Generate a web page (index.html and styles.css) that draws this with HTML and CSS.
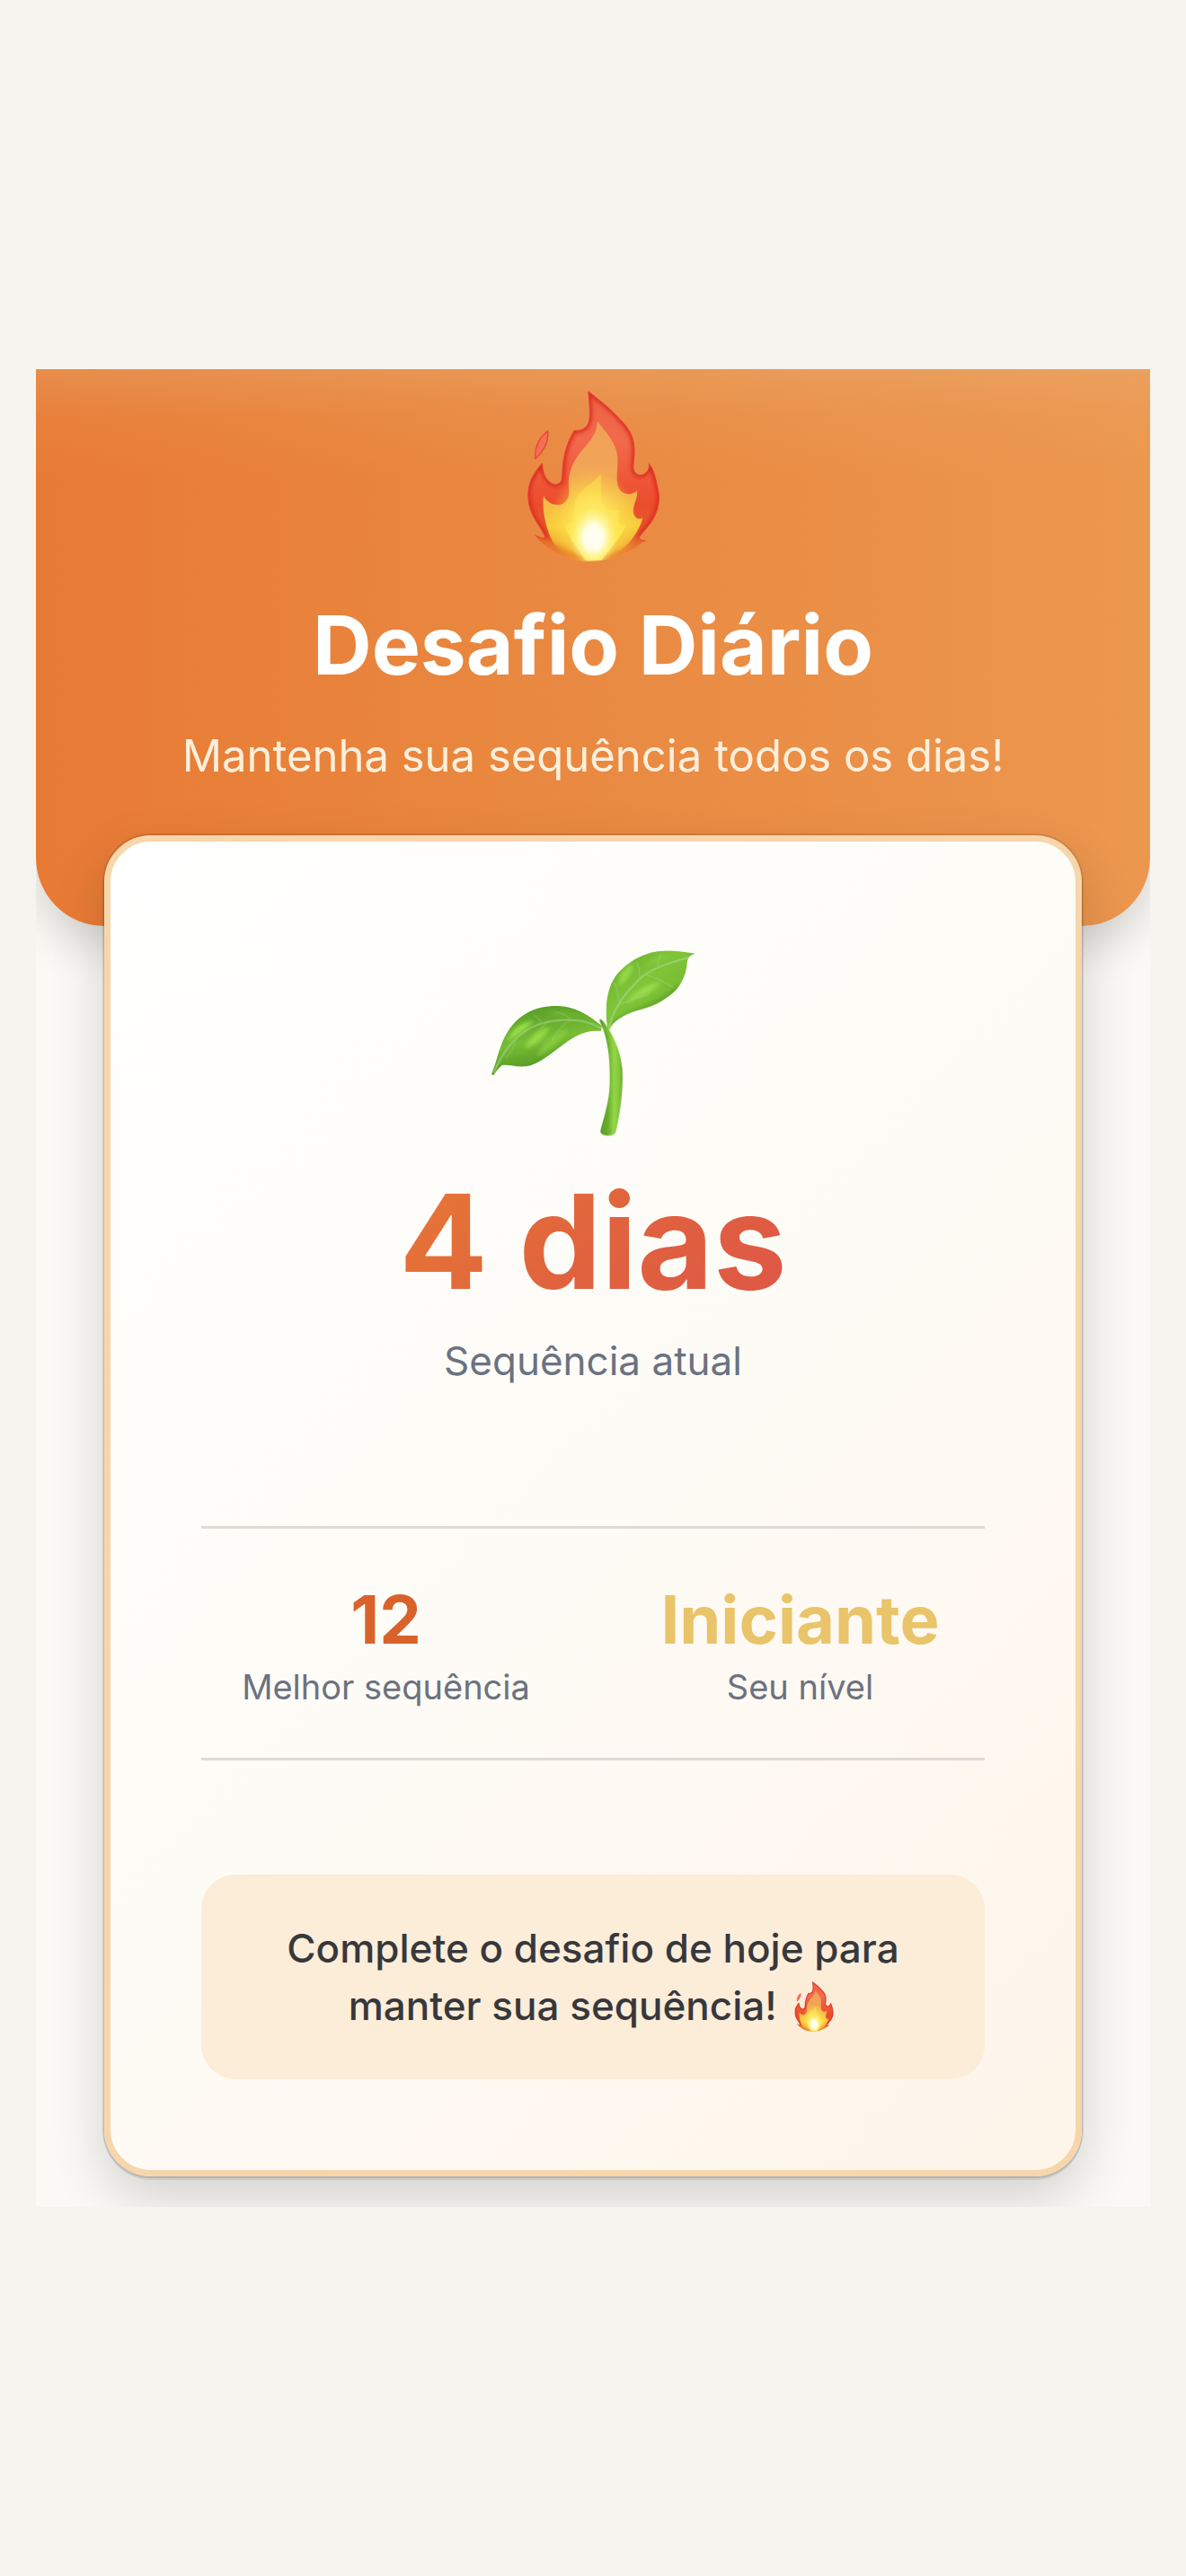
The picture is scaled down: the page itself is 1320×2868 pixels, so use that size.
FILE: index.html
```html
<!DOCTYPE html>
<html lang="pt-BR">
	<head>
		<meta charset="UTF-8">
		<meta name="viewport" content="width=device-width, initial-scale=1">
		<title>Desafio Diário</title>
		<link rel="stylesheet" href="styles.css">
	</head>

	<body>
		<!-- shared flame drawing -->
		<svg class="defs" width="0" height="0" aria-hidden="true">
			<defs>
				<linearGradient id="flameRed" x1="0" y1="0" x2="0" y2="1">
					<stop offset="0" stop-color="#ec6244"/>
					<stop offset="0.3" stop-color="#f2694c"/>
					<stop offset="0.65" stop-color="#ec4d2c"/>
					<stop offset="0.85" stop-color="#e5572a"/>
					<stop offset="1" stop-color="#f0a04c"/>
				</linearGradient>
				<linearGradient id="flameOrange" x1="0" y1="0" x2="0" y2="1">
					<stop offset="0" stop-color="#f0a058"/>
					<stop offset="0.3" stop-color="#f1a457"/>
					<stop offset="0.5" stop-color="#f4b04e"/>
					<stop offset="0.75" stop-color="#f8cd3c"/>
					<stop offset="1" stop-color="#e98a2c"/>
				</linearGradient>
				<linearGradient id="flameYellow" x1="0" y1="0" x2="0" y2="1">
					<stop offset="0" stop-color="#f8c350"/>
					<stop offset="0.5" stop-color="#fad64c"/>
					<stop offset="1" stop-color="#fdee3f"/>
				</linearGradient>
				<radialGradient id="flameHalo">
					<stop offset="0" stop-color="#fff58a" stop-opacity="0.95"/>
					<stop offset="0.5" stop-color="#ffee5c" stop-opacity="0.6"/>
					<stop offset="1" stop-color="#ffe23c" stop-opacity="0"/>
				</radialGradient>
				<radialGradient id="flameGlow">
					<stop offset="0" stop-color="#fffff8"/>
					<stop offset="0.4" stop-color="#fffff0" stop-opacity="0.95"/>
					<stop offset="1" stop-color="#fff88a" stop-opacity="0"/>
				</radialGradient>
				<filter id="soft" x="-10%" y="-10%" width="120%" height="120%">
					<feGaussianBlur stdDeviation="7"/>
				</filter>
				<clipPath id="flameClip">
					<path d="M283 45C320 75 360 105 390 140C425 175 438 205 437 250C436 280 430 300 436 312C445 328 462 330 475 318C486 308 487 298 486 287C500 305 506 325 514 365C524 400 520 430 505 462C492 490 470 510 455 530C450 538 458 546 474 545C450 560 430 575 400 588C360 606 320 615 280 614C240 612 210 603 175 585C145 568 120 548 105 527C115 532 125 537 137 537C145 530 105 480 95 455C82 425 78 395 84 365C90 335 108 310 128 286C130 310 135 335 155 350C170 362 190 358 194 340C198 320 195 290 203 260C210 225 222 200 236 176C255 178 275 172 284 150C292 120 285 80 283 45Z"/>
				</clipPath>
			</defs>
			<symbol id="flame" viewBox="76 43 448 574">
				<path d="M147 178C150 205 145 235 106 270C102 240 115 200 147 178Z" fill="#f3714f" stroke="#ea3f47" stroke-width="4"/>
				<g clip-path="url(#flameClip)">
					<rect x="70" y="40" width="460" height="580" fill="url(#flameRed)"/>
					<path d="M283 45C320 75 360 105 390 140C425 175 438 205 437 250C436 280 430 300 436 312C445 328 462 330 475 318C486 308 487 298 486 287C500 305 506 325 514 365C524 400 520 430 505 462C492 490 470 510 455 530M137 537C145 530 105 480 95 455C82 425 78 395 84 365C90 335 108 310 128 286C130 310 135 335 155 350C170 362 190 358 194 340C198 320 195 290 203 260C210 225 222 200 236 176C255 178 275 172 284 150C292 120 285 80 283 45" fill="none" stroke="#d9291f" stroke-width="15" filter="url(#soft)"/>
					<path d="M313 145C340 180 375 215 380 260C384 300 372 340 385 370C400 395 430 392 446 378C450 410 420 440 440 465C448 474 460 472 465 468C455 510 420 560 370 595C330 612 300 614 275 614C220 600 175 580 155 530C135 480 128 430 133 395C145 420 170 428 190 424C215 415 220 395 218 370C213 330 225 290 255 250C285 215 312 190 313 145Z" fill="url(#flameOrange)"/>
					<path d="M324 320C330 350 318 400 336 430C346 446 372 450 384 440C392 462 372 480 392 492C398 496 404 494 408 490C395 535 355 570 328 610L272 610C250 570 210 530 205 488C220 494 232 484 234 466C236 446 232 420 246 395C265 368 305 350 324 320Z" fill="url(#flameYellow)"/>
					<ellipse cx="300" cy="490" rx="150" ry="180" fill="url(#flameHalo)"/>
					<ellipse cx="300" cy="535" rx="80" ry="100" fill="url(#flameGlow)"/>
					<path d="M105 527C150 545 215 570 272 612L180 614ZM474 545C430 560 375 575 328 610L420 612Z" fill="#e87a28" opacity="0.6" filter="url(#soft)"/>
				</g>
				<path d="M283 45C320 75 360 105 390 140C425 175 438 205 437 250C436 280 430 300 436 312C445 328 462 330 475 318C486 308 487 298 486 287C500 305 506 325 514 365C524 400 520 430 505 462C492 490 470 510 455 530C450 538 458 546 474 545M105 527C115 532 125 537 137 537C145 530 105 480 95 455C82 425 78 395 84 365C90 335 108 310 128 286C130 310 135 335 155 350C170 362 190 358 194 340C198 320 195 290 203 260C210 225 222 200 236 176C255 178 275 172 284 150C292 120 285 80 283 45" fill="none" stroke="#ea4038" stroke-width="3"/>
			</symbol>
		</svg>

		<main class="panel">
			<header class="hero">
				<svg class="hero-icon" role="img" aria-label="Fogo"><use href="#flame"/></svg>
				<h1 class="hero-title">Desafio Diário</h1>
				<p class="hero-text">Mantenha sua sequência todos os dias!</p>
			</header>

			<section class="card">
				<svg class="sprout" viewBox="72 82 686 624" role="img" aria-label="Broto">
					<defs>
						<linearGradient id="leafRight" x1="0" y1="0" x2="1" y2="1">
							<stop offset="0" stop-color="#64a92c"/>
							<stop offset="0.4" stop-color="#80c437"/>
							<stop offset="0.7" stop-color="#78bb33"/>
							<stop offset="1" stop-color="#4b8f23"/>
						</linearGradient>
						<linearGradient id="leafLeft" x1="0.3" y1="0" x2="0.6" y2="1">
							<stop offset="0" stop-color="#559a28"/>
							<stop offset="0.5" stop-color="#78bd34"/>
							<stop offset="1" stop-color="#468820"/>
						</linearGradient>
						<linearGradient id="stem" x1="0" y1="0" x2="1" y2="0">
							<stop offset="0" stop-color="#579a28"/>
							<stop offset="0.35" stop-color="#66ac2c"/>
							<stop offset="0.65" stop-color="#92d544"/>
							<stop offset="1" stop-color="#68ad2f"/>
						</linearGradient>
						<clipPath id="leafRightClip">
							<path d="M462 345C452 280 458 215 490 170C530 120 590 88 650 87C685 86 720 90 755 96C735 102 730 110 728 125C725 170 705 215 660 243C620 275 570 280 530 297C500 312 480 325 468 350Z"/>
						</clipPath>
						<clipPath id="leafLeftClip">
							<path d="M440 355C400 350 365 365 335 385C290 415 250 455 205 470C165 480 135 465 110 469C100 476 90 490 83 501C75 502 73 500 76 495C95 450 100 400 130 355C165 300 220 270 295 271C350 272 400 300 443 338Z"/>
						</clipPath>
					</defs>
					<g clip-path="url(#leafRightClip)">
						<rect x="450" y="80" width="310" height="280" fill="url(#leafRight)"/>
						<g filter="url(#soft)">
							<path d="M497 205C500 165 520 140 548 130C548 165 525 190 497 205Z" fill="#9be04c" opacity="0.8"/>
							<path d="M520 265C550 225 590 195 640 192C620 225 570 240 520 265Z" fill="#a0e552" opacity="0.8"/>
							<path d="M585 140C600 115 630 98 670 100C650 120 620 130 585 140Z" fill="#89ce3e" opacity="0.6"/>
							<path d="M480 330C540 285 640 265 700 205" stroke="#478c22" stroke-width="10" fill="none" opacity="0.6"/>
						</g>
						<path d="M466 345C480 280 520 230 570 180C610 145 660 130 735 108" stroke="#9bd279" stroke-width="7" fill="none" opacity="0.8"/>
						<path d="M500 258C500 230 490 210 484 192M570 180C570 155 566 140 560 122M628 145C632 125 634 110 640 97M500 265C530 260 560 240 600 232M590 168C620 172 650 190 680 208" stroke="#9bd279" stroke-width="4" fill="none" opacity="0.55"/>
					</g>
					<g clip-path="url(#leafLeftClip)">
						<rect x="70" y="265" width="380" height="240" fill="url(#leafLeft)"/>
						<g filter="url(#soft)">
							<path d="M125 390C145 345 175 325 215 322C190 350 160 370 125 390Z" fill="#a5ea4d" opacity="0.85"/>
							<path d="M185 410C200 375 230 350 270 340C250 380 225 405 185 410Z" fill="#a0e44b" opacity="0.75"/>
							<path d="M225 440C240 400 280 360 330 345C310 390 270 420 225 440Z" fill="#8ed13f" opacity="0.7"/>
							<path d="M255 295C290 280 350 290 380 312C340 305 300 310 255 295Z" fill="#72b734" opacity="0.7"/>
						</g>
						<path d="M82 495C110 425 150 375 205 344C270 312 370 305 440 345" stroke="#97ce74" stroke-width="6" fill="none" opacity="0.85"/>
						<path d="M240 328C235 315 228 308 216 302M340 315C325 303 310 296 290 290M270 320C230 345 215 385 195 410M340 317C305 335 290 360 278 385M160 375C150 400 145 425 120 445" stroke="#97ce74" stroke-width="4" fill="none" opacity="0.45"/>
					</g>
					<path d="M434 318C438 314 443 316 447 322C480 365 505 420 511 480C514 560 505 620 490 690C487 700 478 704 463 704C448 704 437 698 438 688C450 640 468 590 469 530C471 460 465 400 448 350Z" fill="url(#stem)"/>
					<path d="M452 335C485 390 498 440 499 500C500 580 490 630 480 680" stroke="#a0e04c" stroke-width="9" fill="none" opacity="0.6" filter="url(#soft)"/>
				</svg>
				<p class="streak">4 dias</p>
				<p class="streak-label">Sequência atual</p>

				<div class="stats">
					<div class="stat">
						<p class="stat-value best">12</p>
						<p class="stat-label">Melhor sequência</p>
					</div>
					<div class="stat">
						<p class="stat-value level">Iniciante</p>
						<p class="stat-label">Seu nível</p>
					</div>
				</div>

				<p class="notice">Complete o desafio de hoje para manter sua sequência! <svg class="notice-icon" role="img" aria-label="Fogo"><use href="#flame"/></svg></p>
			</section>
		</main>
	</body>
</html>
```

FILE: styles.css
```css
*{
	margin: 0;
	padding: 0;
	box-sizing: border-box;
}
body{
	display: flex;
	flex-direction: column;
	justify-content: center;
	min-height: 100vh;
	padding: 40px;
	background: #f5f4ef;
	font-family: Inter, "Liberation Sans", sans-serif;
	text-align: center;
}
.defs{
	position: absolute;
}
.panel{
	padding-bottom: 34px;
	background: #faf9f5;
	overflow: hidden;
}

/* header */
.hero{
	padding: 24px 40px 153px;
	border-radius: 0 0 76px 76px;
	background:
		linear-gradient(rgba(232, 185, 130, 0.3), rgba(232, 185, 130, 0.1) 50px, rgba(232, 185, 130, 0) 120px),
		linear-gradient(90deg, #e87a35, #e9873f 40%, #ec974f);
	box-shadow: 0 20px 50px rgba(0, 0, 0, 0.16);
}
.hero-icon{
	display: block;
	width: 149px;
	height: 191px;
	margin: 0 auto 34px;
}
.hero-title{
	font-size: 91px;
	line-height: 116px;
	font-weight: 700;
	color: #fff;
}
.hero-text{
	margin-top: 30px;
	font-size: 49px;
	line-height: 72px;
	color: #fff0dc;
}

/* streak card */
.card{
	position: relative;
	margin: -101px 76px 0;
	padding: 101px;
	border: 7px solid #f7d6ab;
	border-radius: 52px;
	background: linear-gradient(135deg, #fff, #fefcf7 45%, #fef5ea);
	box-shadow:
		0 0 0 2px rgba(0, 0, 0, 0.1),
		0 3px 0 1px rgba(0, 0, 0, 0.08),
		0 24px 60px rgba(0, 0, 0, 0.16);
}
.sprout{
	display: block;
	width: 229px;
	height: 208px;
	margin: 19px auto 27px;
}
.streak{
	width: fit-content;
	margin: 0 auto;
	font-size: 146px;
	line-height: 180px;
	font-weight: 700;
	color: transparent;
	background: linear-gradient(135deg, #e87a35, #e0633d 50%, #de5648);
	-webkit-background-clip: text;
	background-clip: text;
}
.streak-label{
	margin-top: 10px;
	font-size: 44px;
	line-height: 66px;
	color: #6b7280;
}
.stats{
	display: grid;
	grid-template-columns: 1fr 1fr;
	gap: 50px;
	margin-top: 151px;
	padding: 56px 0 50px;
	border-top: 3px solid #dedad5;
	border-bottom: 3px solid #dedad5;
}
.stat-value{
	font-size: 74px;
	line-height: 90px;
	font-weight: 700;
}
.best{
	color: #d9622b;
}
.level{
	color: #e9c46a;
}
.stat-label{
	margin-top: 2px;
	font-size: 38px;
	line-height: 57px;
	color: #6b7280;
}
.notice{
	margin-top: 127px;
	padding: 50px 76px;
	border-radius: 38px;
	background: #fcedd9;
	font-size: 44px;
	line-height: 64px;
	font-weight: 500;
	color: #37383c;
}
.notice-icon{
	width: 44px;
	height: 56px;
	margin: 0 4px 0 8px;
	vertical-align: -13px;
}
```
